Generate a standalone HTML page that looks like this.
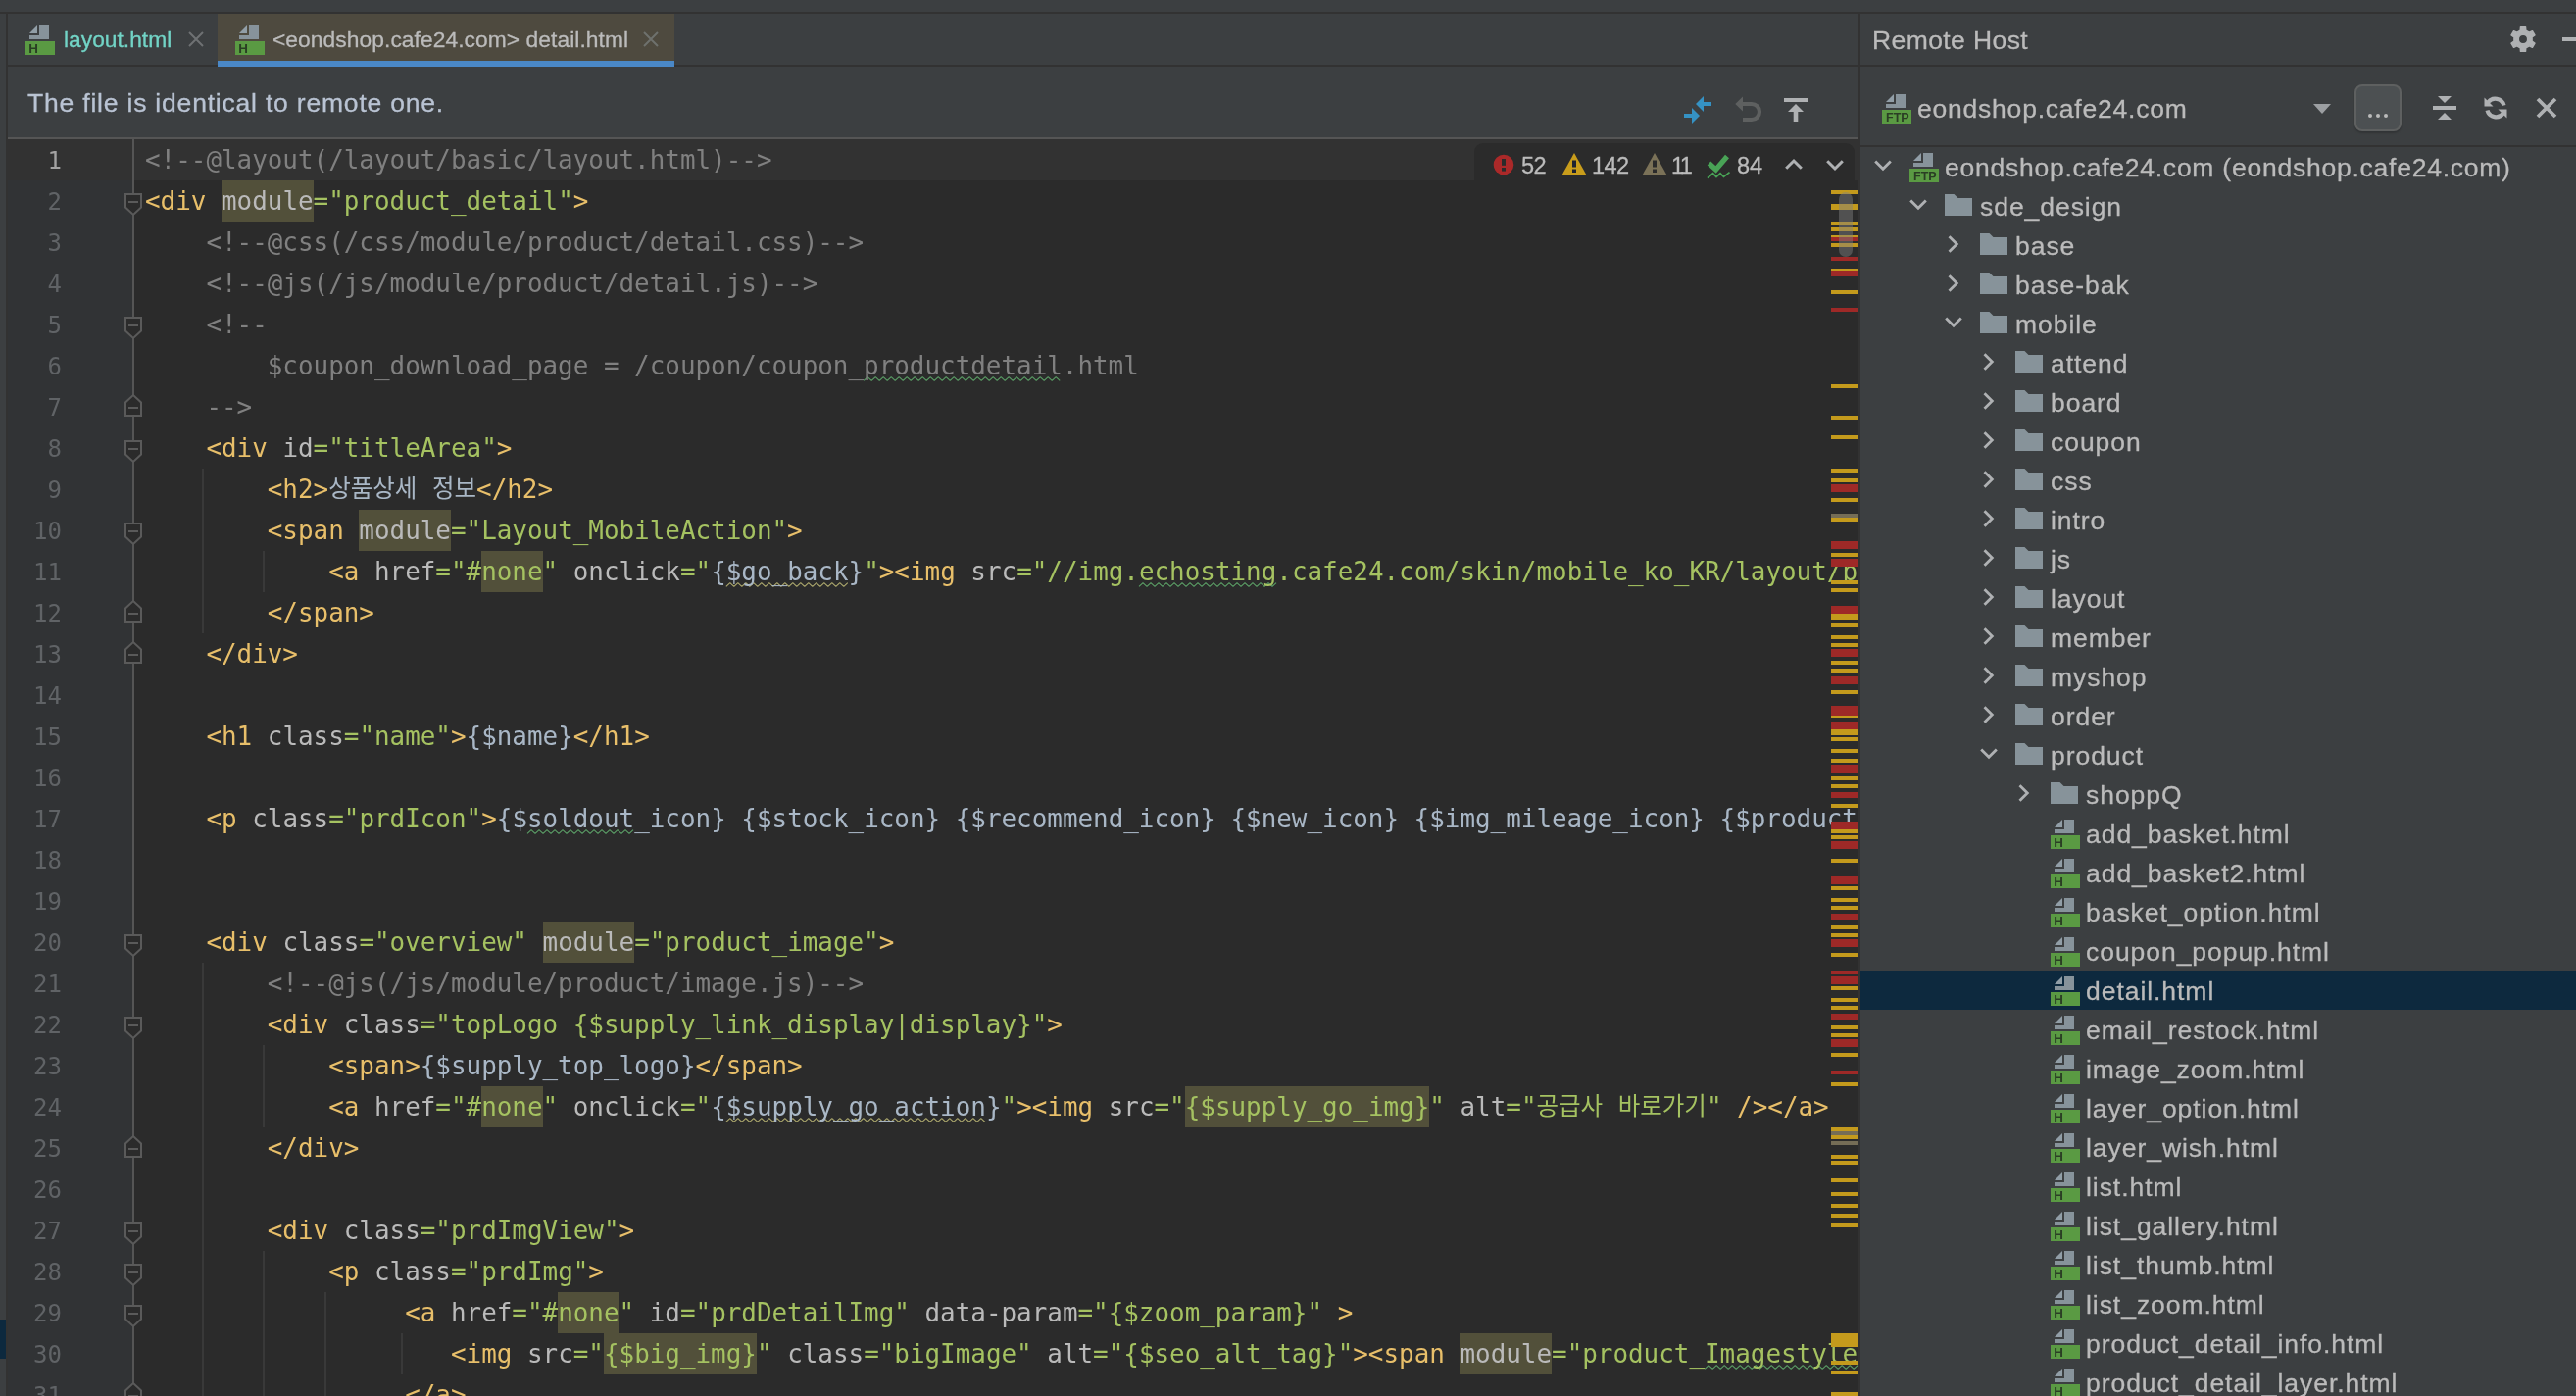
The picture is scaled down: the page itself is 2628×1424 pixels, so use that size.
<!DOCTYPE html>
<html lang="ko"><head><meta charset="utf-8"><title>detail.html</title>
<style>

*{box-sizing:border-box;margin:0;padding:0}
html,body{width:2628px;height:1424px;overflow:hidden;background:#3c3f41}
body{position:relative;font-family:"Liberation Sans","Noto Sans CJK KR",sans-serif;color:#bbbbbb;font-size:26.5px;letter-spacing:.76px;-webkit-text-stroke:.3px}
#root{position:absolute;left:0;top:0;width:2628px;height:1424px;overflow:hidden;will-change:transform}
.abs{position:absolute}
.ui{position:absolute;white-space:nowrap;line-height:1}
svg{position:absolute;overflow:visible}
#ed{position:absolute;left:8px;top:142px;width:1888px;height:1282px;background:#2b2b2b;overflow:hidden}
#gut{position:absolute;left:0;top:0;width:127px;height:100%;background:#313335}
#gsep{position:absolute;left:127px;top:0;width:2px;height:100%;background:#555555}
.ln{-webkit-text-stroke:0;position:absolute;left:0;width:55px;text-align:right;height:42px;line-height:42px;color:#606366;font-family:"DejaVu Sans Mono","Liberation Mono",monospace;font-size:24px;letter-spacing:0;padding-top:.7px}
.cl{-webkit-text-stroke:0;position:absolute;left:140.0px;height:42px;line-height:42px;white-space:pre;font-family:"DejaVu Sans Mono","Liberation Mono","Noto Sans CJK KR",monospace;font-size:25.91px;letter-spacing:0;color:#a9b7c6}
.cl span{display:inline-block;height:42px;vertical-align:top}
.c{color:#808080}.t{color:#e8bf6a}.a{color:#bababa}.v{color:#a5c261}.x{color:#a9b7c6}
.h{background:#52503a}
.k{font-size:24.5px}
.ig{position:absolute;width:2px;background:#393939}
.mk{position:absolute;left:1860px;width:28px}
.row{position:absolute;left:0;width:100%;height:40px}
.row .ui{top:6px;line-height:30px}

</style></head><body><div id="root">
<div class="abs" style="left:0;top:12px;width:2628px;height:2px;background:#323232"></div>
<div class="abs" style="left:6px;top:14px;width:2px;height:1410px;background:#323232"></div>
<div class="abs" style="left:0;top:1346px;width:6px;height:40px;background:#0d293e"></div>
<div class="abs" style="left:8px;top:66px;width:1888px;height:2px;background:#323232"></div>
<div class="abs" style="left:222px;top:14px;width:466px;height:54px;background:#4e4a3f"></div>
<div class="abs" style="left:222px;top:62px;width:466px;height:6px;background:#4a88c7"></div>
<svg style="left:26px;top:26px" width="30" height="30" viewBox="0 0 30 30"><path d="M14 0H24V14H4V10H14Z" fill="#87939b"/><path d="M12 0V8H4Z" fill="#919ea7"/><rect x="0" y="16" width="30" height="14" fill="#5a9a43"/><text x="3.2" y="27.8" font-family="Liberation Sans,sans-serif" font-weight="bold" font-size="13.4" letter-spacing="0" stroke="none" fill="#2a3e24" style="-webkit-text-stroke:0">H</text></svg>
<div class="ui" style="left:65px;top:29px;font-size:22.8px;letter-spacing:0;color:#72d4c6">layout.html</div>
<svg style="left:193px;top:33px" width="14" height="14" viewBox="0 0 14 14"><path d="M0 0L14 14M14 0L0 14" stroke="#6e7173" stroke-width="2" fill="none"/></svg>
<svg style="left:240px;top:26px" width="30" height="30" viewBox="0 0 30 30"><path d="M14 0H24V14H4V10H14Z" fill="#87939b"/><path d="M12 0V8H4Z" fill="#919ea7"/><rect x="0" y="16" width="30" height="14" fill="#5a9a43"/><text x="3.2" y="27.8" font-family="Liberation Sans,sans-serif" font-weight="bold" font-size="13.4" letter-spacing="0" stroke="none" fill="#2a3e24" style="-webkit-text-stroke:0">H</text></svg>
<div class="ui" style="left:278px;top:29px;font-size:22.8px;letter-spacing:.06px;color:#bbbbbb">&lt;eondshop.cafe24.com&gt; detail.html</div>
<svg style="left:657px;top:33px" width="14" height="14" viewBox="0 0 14 14"><path d="M0 0L14 14M14 0L0 14" stroke="#6e716d" stroke-width="2" fill="none"/></svg>
<div class="abs" style="left:8px;top:140px;width:1888px;height:2px;background:#555555"></div>
<div class="ui" style="left:28px;top:91.5px;letter-spacing:.8px;color:#b9c3d3">The file is identical to remote one.</div>
<svg style="left:1716px;top:96px" width="32" height="32" viewBox="0 0 32 32" fill="#3592c4"><path d="M14 10L22 2V8H30V12H22V18Z"/><path d="M18 22L10 14V20H2V24H10V30Z"/></svg>
<svg style="left:1768px;top:96px" width="32" height="32" viewBox="0 0 32 32"><path d="M2.3 10L10 2.4V17.4Z" fill="#5e6060"/><path d="M10 10H19A8 8 0 0 1 19 26H10" stroke="#5e6060" stroke-width="4.2" fill="none"/></svg>
<svg style="left:1816px;top:96px" width="32" height="32" viewBox="0 0 32 32" fill="#afb1b3"><rect x="4" y="4" width="24" height="4"/><path d="M16 10L24 18H18.3V28H13.7V18H8Z"/></svg>
<div id="ed">
<div id="gut"></div>
<div class="abs" style="left:0;top:0;width:1888px;height:42px;background:#323232"></div>
<div id="gsep"></div>
<div class="ig" style="left:197.8px;top:336px;height:168px"></div>
<div class="ig" style="left:260.2px;top:420px;height:42px"></div>
<div class="ig" style="left:197.8px;top:840px;height:462px"></div>
<div class="ig" style="left:260.2px;top:924px;height:84px"></div>
<div class="ig" style="left:260.2px;top:1134px;height:168px"></div>
<div class="ig" style="left:322.6px;top:1176px;height:126px"></div>
<div class="ig" style="left:400.6px;top:1218px;height:42px"></div>
<div class="ln" style="top:0px;color:#a4a3a3">1</div>
<div class="cl" style="top:0px"><span class="c">&lt;!--@layout(/layout/basic/layout.html)--&gt;</span></div>
<div class="ln" style="top:42px">2</div>
<div class="cl" style="top:42px"><span class="t">&lt;div </span><span class="a h">module</span><span class="v">="product_detail"</span><span class="t">&gt;</span></div>
<div class="ln" style="top:84px">3</div>
<div class="cl" style="top:84px"><span class="c">    &lt;!--@css(/css/module/product/detail.css)--&gt;</span></div>
<div class="ln" style="top:126px">4</div>
<div class="cl" style="top:126px"><span class="c">    &lt;!--@js(/js/module/product/detail.js)--&gt;</span></div>
<div class="ln" style="top:168px">5</div>
<div class="cl" style="top:168px"><span class="c">    &lt;!--</span></div>
<div class="ln" style="top:210px">6</div>
<svg style="left:0;top:210px" width="10" height="10"><polyline points="873.2 36.4 877.2 32.6 881.2 36.4 885.2 32.6 889.2 36.4 893.2 32.6 897.2 36.4 901.2 32.6 905.2 36.4 909.2 32.6 913.2 36.4 917.2 32.6 921.2 36.4 925.2 32.6 929.2 36.4 933.2 32.6 937.2 36.4 941.2 32.6 945.2 36.4 949.2 32.6 953.2 36.4 957.2 32.6 961.2 36.4 965.2 32.6 969.2 36.4 973.2 32.6 977.2 36.4 981.2 32.6 985.2 36.4 989.2 32.6 993.2 36.4 997.2 32.6 1001.2 36.4 1005.2 32.6 1009.2 36.4 1013.2 32.6 1017.2 36.4 1021.2 32.6 1025.2 36.4 1029.2 32.6 1033.2 36.4 1037.2 32.6 1041.2 36.4 1045.2 32.6 1049.2 36.4 1053.2 32.6 1057.2 36.4 1061.2 32.6 1065.2 36.4 1069.2 32.6 1073.2 36.4" fill="none" stroke="#5a9d65" stroke-width="1.15" stroke-linejoin="bevel"/></svg>
<div class="cl" style="top:210px"><span class="c">        $coupon_download_page = /coupon/coupon_</span><span class="c">productdetail</span><span class="c">.html</span></div>
<div class="ln" style="top:252px">7</div>
<div class="cl" style="top:252px"><span class="c">    --&gt;</span></div>
<div class="ln" style="top:294px">8</div>
<div class="cl" style="top:294px"><span class="t">    &lt;div </span><span class="a">id</span><span class="v">="titleArea"</span><span class="t">&gt;</span></div>
<div class="ln" style="top:336px">9</div>
<div class="cl" style="top:336px"><span class="t">        &lt;h2&gt;</span><span class="x k">상품상세</span><span class="x"> </span><span class="x k">정보</span><span class="t">&lt;/h2&gt;</span></div>
<div class="ln" style="top:378px">10</div>
<div class="cl" style="top:378px"><span class="t">        &lt;span </span><span class="a h">module</span><span class="v">="Layout_MobileAction"</span><span class="t">&gt;</span></div>
<div class="ln" style="top:420px">11</div>
<svg style="left:0;top:420px" width="10" height="10"><polyline points="732.8 36.4 736.8 32.6 740.8 36.4 744.8 32.6 748.8 36.4 752.8 32.6 756.8 36.4 760.8 32.6 764.8 36.4 768.8 32.6 772.8 36.4 776.8 32.6 780.8 36.4 784.8 32.6 788.8 36.4 792.8 32.6 796.8 36.4 800.8 32.6 804.8 36.4 808.8 32.6 812.8 36.4 816.8 32.6 820.8 36.4 824.8 32.6 828.8 36.4 832.8 32.6 836.8 36.4 840.8 32.6 844.8 36.4 848.8 32.6 852.8 36.4 856.8 32.6" fill="none" stroke="#aca86d" stroke-width="1.15" stroke-linejoin="bevel"/></svg>
<svg style="left:0;top:420px" width="10" height="10"><polyline points="1154.0 36.4 1158.0 32.6 1162.0 36.4 1166.0 32.6 1170.0 36.4 1174.0 32.6 1178.0 36.4 1182.0 32.6 1186.0 36.4 1190.0 32.6 1194.0 36.4 1198.0 32.6 1202.0 36.4 1206.0 32.6 1210.0 36.4 1214.0 32.6 1218.0 36.4 1222.0 32.6 1226.0 36.4 1230.0 32.6 1234.0 36.4 1238.0 32.6 1242.0 36.4 1246.0 32.6 1250.0 36.4 1254.0 32.6 1258.0 36.4 1262.0 32.6 1266.0 36.4 1270.0 32.6 1274.0 36.4 1278.0 32.6 1282.0 36.4 1286.0 32.6 1290.0 36.4 1294.0 32.6" fill="none" stroke="#5a9d65" stroke-width="1.15" stroke-linejoin="bevel"/></svg>
<div class="cl" style="top:420px"><span class="t">            &lt;a </span><span class="a">href</span><span class="v">="#</span><span class="v h">none</span><span class="v">"</span><span class="a"> onclick</span><span class="v">="</span><span class="x">{</span><span class="x">$go_back</span><span class="x">}</span><span class="v">"</span><span class="t">&gt;&lt;img </span><span class="a">src</span><span class="v">="//img.</span><span class="v">echosting</span><span class="v">.cafe24.com/skin/mobile_ko_KR/layout/btn_back.gif"</span><span class="a"> width</span><span class="v">="33"</span></div>
<div class="ln" style="top:462px">12</div>
<div class="cl" style="top:462px"><span class="t">        &lt;/span&gt;</span></div>
<div class="ln" style="top:504px">13</div>
<div class="cl" style="top:504px"><span class="t">    &lt;/div&gt;</span></div>
<div class="ln" style="top:546px">14</div>
<div class="ln" style="top:588px">15</div>
<div class="cl" style="top:588px"><span class="t">    &lt;h1 </span><span class="a">class</span><span class="v">="name"</span><span class="t">&gt;</span><span class="x">{$name}</span><span class="t">&lt;/h1&gt;</span></div>
<div class="ln" style="top:630px">16</div>
<div class="ln" style="top:672px">17</div>
<svg style="left:0;top:672px" width="10" height="10"><polyline points="530.0 36.4 534.0 32.6 538.0 36.4 542.0 32.6 546.0 36.4 550.0 32.6 554.0 36.4 558.0 32.6 562.0 36.4 566.0 32.6 570.0 36.4 574.0 32.6 578.0 36.4 582.0 32.6 586.0 36.4 590.0 32.6 594.0 36.4 598.0 32.6 602.0 36.4 606.0 32.6 610.0 36.4 614.0 32.6 618.0 36.4 622.0 32.6 626.0 36.4 630.0 32.6 634.0 36.4 638.0 32.6" fill="none" stroke="#5a9d65" stroke-width="1.15" stroke-linejoin="bevel"/></svg>
<div class="cl" style="top:672px"><span class="t">    &lt;p </span><span class="a">class</span><span class="v">="prdIcon"</span><span class="t">&gt;</span><span class="x">{$</span><span class="x">soldout</span><span class="x">_icon} {$stock_icon} {$recommend_icon} {$new_icon} {$img_mileage_icon} {$product_custom_icon}</span></div>
<div class="ln" style="top:714px">18</div>
<div class="ln" style="top:756px">19</div>
<div class="ln" style="top:798px">20</div>
<div class="cl" style="top:798px"><span class="t">    &lt;div </span><span class="a">class</span><span class="v">="overview"</span><span class="a"> </span><span class="a h">module</span><span class="v">="product_image"</span><span class="t">&gt;</span></div>
<div class="ln" style="top:840px">21</div>
<div class="cl" style="top:840px"><span class="c">        &lt;!--@js(/js/module/product/image.js)--&gt;</span></div>
<div class="ln" style="top:882px">22</div>
<div class="cl" style="top:882px"><span class="t">        &lt;div </span><span class="a">class</span><span class="v">="topLogo {$supply_link_display|display}"</span><span class="t">&gt;</span></div>
<div class="ln" style="top:924px">23</div>
<div class="cl" style="top:924px"><span class="t">            &lt;span&gt;</span><span class="x">{$supply_top_logo}</span><span class="t">&lt;/span&gt;</span></div>
<div class="ln" style="top:966px">24</div>
<svg style="left:0;top:966px" width="10" height="10"><polyline points="732.8 36.4 736.8 32.6 740.8 36.4 744.8 32.6 748.8 36.4 752.8 32.6 756.8 36.4 760.8 32.6 764.8 36.4 768.8 32.6 772.8 36.4 776.8 32.6 780.8 36.4 784.8 32.6 788.8 36.4 792.8 32.6 796.8 36.4 800.8 32.6 804.8 36.4 808.8 32.6 812.8 36.4 816.8 32.6 820.8 36.4 824.8 32.6 828.8 36.4 832.8 32.6 836.8 36.4 840.8 32.6 844.8 36.4 848.8 32.6 852.8 36.4 856.8 32.6 860.8 36.4 864.8 32.6 868.8 36.4 872.8 32.6 876.8 36.4 880.8 32.6 884.8 36.4 888.8 32.6 892.8 36.4 896.8 32.6 900.8 36.4 904.8 32.6 908.8 36.4 912.8 32.6 916.8 36.4 920.8 32.6 924.8 36.4 928.8 32.6 932.8 36.4 936.8 32.6 940.8 36.4 944.8 32.6 948.8 36.4 952.8 32.6 956.8 36.4 960.8 32.6 964.8 36.4 968.8 32.6 972.8 36.4 976.8 32.6 980.8 36.4 984.8 32.6 988.8 36.4 992.8 32.6 996.8 36.4" fill="none" stroke="#aca86d" stroke-width="1.15" stroke-linejoin="bevel"/></svg>
<div class="cl" style="top:966px"><span class="t">            &lt;a </span><span class="a">href</span><span class="v">="#</span><span class="v h">none</span><span class="v">"</span><span class="a"> onclick</span><span class="v">="</span><span class="x">{</span><span class="x">$supply_go_action</span><span class="x">}</span><span class="v">"</span><span class="t">&gt;&lt;img </span><span class="a">src</span><span class="v">="</span><span class="v h">{$supply_go_img}</span><span class="v">"</span><span class="a"> alt</span><span class="v">="</span><span class="v k">공급사</span><span class="v"> </span><span class="v k">바로가기</span><span class="v">"</span><span class="t"> /&gt;&lt;/a&gt;</span></div>
<div class="ln" style="top:1008px">25</div>
<div class="cl" style="top:1008px"><span class="t">        &lt;/div&gt;</span></div>
<div class="ln" style="top:1050px">26</div>
<div class="ln" style="top:1092px">27</div>
<div class="cl" style="top:1092px"><span class="t">        &lt;div </span><span class="a">class</span><span class="v">="prdImgView"</span><span class="t">&gt;</span></div>
<div class="ln" style="top:1134px">28</div>
<div class="cl" style="top:1134px"><span class="t">            &lt;p </span><span class="a">class</span><span class="v">="prdImg"</span><span class="t">&gt;</span></div>
<div class="ln" style="top:1176px">29</div>
<div class="cl" style="top:1176px"><span class="t">                 &lt;a </span><span class="a">href</span><span class="v">="#</span><span class="v h">none</span><span class="v">"</span><span class="a"> id</span><span class="v">="prdDetailImg"</span><span class="a"> data-param</span><span class="v">="{$zoom_param}"</span><span class="t"> &gt;</span></div>
<div class="ln" style="top:1218px">30</div>
<svg style="left:0;top:1218px" width="10" height="10"><polyline points="1731.2 36.4 1735.2 32.6 1739.2 36.4 1743.2 32.6 1747.2 36.4 1751.2 32.6 1755.2 36.4 1759.2 32.6 1763.2 36.4 1767.2 32.6 1771.2 36.4 1775.2 32.6 1779.2 36.4 1783.2 32.6 1787.2 36.4 1791.2 32.6 1795.2 36.4 1799.2 32.6 1803.2 36.4 1807.2 32.6 1811.2 36.4 1815.2 32.6 1819.2 36.4 1823.2 32.6 1827.2 36.4 1831.2 32.6 1835.2 36.4 1839.2 32.6 1843.2 36.4 1847.2 32.6 1851.2 36.4 1855.2 32.6 1859.2 36.4 1863.2 32.6 1867.2 36.4 1871.2 32.6 1875.2 36.4 1879.2 32.6 1883.2 36.4 1887.2 32.6" fill="none" stroke="#5a9d65" stroke-width="1.15" stroke-linejoin="bevel"/></svg>
<div class="cl" style="top:1218px"><span class="t">                    &lt;img </span><span class="a">src</span><span class="v">="</span><span class="v h">{$big_img}</span><span class="v">"</span><span class="a"> class</span><span class="v">="bigImage"</span><span class="a"> alt</span><span class="v">="{$seo_alt_tag}"</span><span class="t">&gt;&lt;span </span><span class="a h">module</span><span class="v">="product_</span><span class="v">Imagestyle</span><span class="v">"</span></div>
<div class="ln" style="top:1260px">31</div>
<div class="cl" style="top:1260px"><span class="t">                 &lt;/a&gt;</span></div>
<div class="abs" style="left:1496px;top:4px;width:388px;height:38px;background:#2b2b2b;border-radius:9px 9px 0 0"></div>
<svg style="left:1515px;top:15px" width="22" height="22" viewBox="0 0 22 22"><circle cx="11" cy="11" r="10.3" fill="#ab2929"/><rect x="9" y="5" width="4" height="6.8" fill="#2b2b2b"/><rect x="9" y="14" width="4" height="3.6" fill="#2b2b2b"/></svg>
<svg style="left:1585px;top:14px" width="26" height="23" viewBox="0 0 26 23"><path d="M13 0L25.2 22H0.8Z" fill="#c99d1b"/><rect x="11" y="7.5" width="4" height="7" fill="#1d2230"/><rect x="11" y="16.5" width="4" height="3.5" fill="#1d2230"/></svg>
<svg style="left:1667px;top:14px" width="26" height="23" viewBox="0 0 26 23"><path d="M13 0L25.2 22H0.8Z" fill="#7b7258"/><rect x="11" y="7.5" width="4" height="7" fill="#2b2b2b"/><rect x="11" y="16.5" width="4" height="3.5" fill="#2b2b2b"/></svg>
<svg style="left:1733px;top:15px" width="26" height="26" viewBox="0 0 26 26"><path d="M2.5 9.5L9.5 16L21 2.5" stroke="#49a356" stroke-width="5.2" fill="none"/><path d="M1 24.6L6.5 19.8L10 23.4L14 19.8L17.5 23.4L23.5 18.6" stroke="#49a356" stroke-width="1.8" fill="none"/></svg>
<div class="ui" style="left:1544px;top:15.5px;font-size:23.6px;letter-spacing:-0.6px;color:#bbbbbb">52</div>
<div class="ui" style="left:1616px;top:15.5px;font-size:23.6px;letter-spacing:-0.6px;color:#bbbbbb">142</div>
<div class="ui" style="left:1697px;top:15.5px;font-size:23.6px;letter-spacing:-2.6px;color:#bbbbbb">11</div>
<div class="ui" style="left:1764px;top:15.5px;font-size:23.6px;letter-spacing:0px;color:#bbbbbb">84</div>
<svg style="left:1813px;top:19px" width="18" height="12" viewBox="0 0 18 12"><path d="M1.2 10.8L9 3L16.8 10.8" stroke="#afb1b3" stroke-width="3" fill="none"/></svg>
<svg style="left:1855px;top:21px" width="18" height="12" viewBox="0 0 18 12"><path d="M1.2 1.2L9 9L16.8 1.2" stroke="#afb1b3" stroke-width="3" fill="none"/></svg>
<div class="mk" style="top:52px;height:4px;background:#c49a1c"></div>
<div class="mk" style="top:66px;height:6px;background:#c49a1c"></div>
<div class="mk" style="top:84px;height:4px;background:#c49a1c"></div>
<div class="mk" style="top:90px;height:4px;background:#c49a1c"></div>
<div class="mk" style="top:98px;height:2px;background:#c49a1c"></div>
<div class="mk" style="top:100px;height:4px;background:#9e2927"></div>
<div class="mk" style="top:106px;height:4px;background:#c49a1c"></div>
<div class="mk" style="top:120px;height:4px;background:#9e2927"></div>
<div class="mk" style="top:132px;height:2px;background:#c49a1c"></div>
<div class="mk" style="top:134px;height:6px;background:#9e2927"></div>
<div class="mk" style="top:154px;height:4px;background:#c49a1c"></div>
<div class="mk" style="top:172px;height:4px;background:#9e2927"></div>
<div class="mk" style="top:250px;height:4px;background:#c49a1c"></div>
<div class="mk" style="top:282px;height:4px;background:#c49a1c"></div>
<div class="mk" style="top:302px;height:4px;background:#c49a1c"></div>
<div class="mk" style="top:336px;height:4px;background:#c49a1c"></div>
<div class="mk" style="top:346px;height:4px;background:#c49a1c"></div>
<div class="mk" style="top:352px;height:8px;background:#9e2927"></div>
<div class="mk" style="top:366px;height:4px;background:#c49a1c"></div>
<div class="mk" style="top:382px;height:4px;background:#756d56"></div>
<div class="mk" style="top:386px;height:4px;background:#c49a1c"></div>
<div class="mk" style="top:410px;height:8px;background:#9e2927"></div>
<div class="mk" style="top:422px;height:4px;background:#c49a1c"></div>
<div class="mk" style="top:428px;height:8px;background:#9e2927"></div>
<div class="mk" style="top:450px;height:4px;background:#c49a1c"></div>
<div class="mk" style="top:458px;height:4px;background:#c49a1c"></div>
<div class="mk" style="top:476px;height:8px;background:#9e2927"></div>
<div class="mk" style="top:484px;height:6px;background:#c49a1c"></div>
<div class="mk" style="top:494px;height:4px;background:#c49a1c"></div>
<div class="mk" style="top:506px;height:4px;background:#c49a1c"></div>
<div class="mk" style="top:514px;height:4px;background:#c49a1c"></div>
<div class="mk" style="top:520px;height:8px;background:#9e2927"></div>
<div class="mk" style="top:532px;height:4px;background:#c49a1c"></div>
<div class="mk" style="top:540px;height:4px;background:#c49a1c"></div>
<div class="mk" style="top:548px;height:8px;background:#9e2927"></div>
<div class="mk" style="top:562px;height:4px;background:#c49a1c"></div>
<div class="mk" style="top:578px;height:10px;background:#9e2927"></div>
<div class="mk" style="top:588px;height:2px;background:#c49a1c"></div>
<div class="mk" style="top:594px;height:8px;background:#9e2927"></div>
<div class="mk" style="top:602px;height:6px;background:#c49a1c"></div>
<div class="mk" style="top:610px;height:4px;background:#c49a1c"></div>
<div class="mk" style="top:622px;height:4px;background:#c49a1c"></div>
<div class="mk" style="top:632px;height:4px;background:#c49a1c"></div>
<div class="mk" style="top:638px;height:8px;background:#9e2927"></div>
<div class="mk" style="top:650px;height:4px;background:#c49a1c"></div>
<div class="mk" style="top:658px;height:4px;background:#c49a1c"></div>
<div class="mk" style="top:666px;height:6px;background:#9e2927"></div>
<div class="mk" style="top:678px;height:4px;background:#c49a1c"></div>
<div class="mk" style="top:696px;height:8px;background:#9e2927"></div>
<div class="mk" style="top:704px;height:4px;background:#c49a1c"></div>
<div class="mk" style="top:710px;height:4px;background:#c49a1c"></div>
<div class="mk" style="top:716px;height:8px;background:#9e2927"></div>
<div class="mk" style="top:734px;height:4px;background:#c49a1c"></div>
<div class="mk" style="top:752px;height:8px;background:#9e2927"></div>
<div class="mk" style="top:762px;height:4px;background:#c49a1c"></div>
<div class="mk" style="top:774px;height:4px;background:#c49a1c"></div>
<div class="mk" style="top:782px;height:4px;background:#c49a1c"></div>
<div class="mk" style="top:790px;height:6px;background:#9e2927"></div>
<div class="mk" style="top:802px;height:4px;background:#c49a1c"></div>
<div class="mk" style="top:810px;height:4px;background:#c49a1c"></div>
<div class="mk" style="top:816px;height:8px;background:#9e2927"></div>
<div class="mk" style="top:830px;height:4px;background:#c49a1c"></div>
<div class="mk" style="top:848px;height:4px;background:#9e2927"></div>
<div class="mk" style="top:854px;height:8px;background:#9e2927"></div>
<div class="mk" style="top:864px;height:4px;background:#c49a1c"></div>
<div class="mk" style="top:876px;height:4px;background:#c49a1c"></div>
<div class="mk" style="top:884px;height:4px;background:#c49a1c"></div>
<div class="mk" style="top:892px;height:6px;background:#9e2927"></div>
<div class="mk" style="top:904px;height:4px;background:#c49a1c"></div>
<div class="mk" style="top:912px;height:4px;background:#c49a1c"></div>
<div class="mk" style="top:918px;height:8px;background:#9e2927"></div>
<div class="mk" style="top:932px;height:4px;background:#c49a1c"></div>
<div class="mk" style="top:950px;height:4px;background:#9e2927"></div>
<div class="mk" style="top:962px;height:4px;background:#c49a1c"></div>
<div class="mk" style="top:1008px;height:4px;background:#c49a1c"></div>
<div class="mk" style="top:1012px;height:4px;background:#756d56"></div>
<div class="mk" style="top:1016px;height:4px;background:#c49a1c"></div>
<div class="mk" style="top:1022px;height:4px;background:#756d56"></div>
<div class="mk" style="top:1036px;height:4px;background:#c49a1c"></div>
<div class="mk" style="top:1042px;height:4px;background:#c49a1c"></div>
<div class="mk" style="top:1060px;height:4px;background:#c49a1c"></div>
<div class="mk" style="top:1074px;height:4px;background:#c49a1c"></div>
<div class="mk" style="top:1086px;height:4px;background:#c49a1c"></div>
<div class="mk" style="top:1096px;height:4px;background:#c49a1c"></div>
<div class="mk" style="top:1106px;height:4px;background:#c49a1c"></div>
<div class="mk" style="top:1218px;height:14px;background:#c49a1c"></div>
<div class="mk" style="top:1246px;height:4px;background:#c49a1c"></div>
<div class="mk" style="top:1256px;height:4px;background:#c49a1c"></div>
<div class="mk" style="top:1278px;height:4px;background:#c49a1c"></div>
<div class="abs" style="left:1868px;top:54px;width:14px;height:66px;border-radius:7px;background:rgba(128,128,128,.45)"></div>
<svg style="left:119px;top:55px" width="18" height="23" viewBox="0 0 18 23"><path d="M1 1H17V14.5L9 22L1 14.5Z" fill="#2b2b2b" stroke="#5a5a5a" stroke-width="2"/><rect x="4" y="8" width="10" height="2" fill="#5a5a5a"/></svg>
<svg style="left:119px;top:181px" width="18" height="23" viewBox="0 0 18 23"><path d="M1 1H17V14.5L9 22L1 14.5Z" fill="#2b2b2b" stroke="#5a5a5a" stroke-width="2"/><rect x="4" y="8" width="10" height="2" fill="#5a5a5a"/></svg>
<svg style="left:119px;top:260px" width="18" height="23" viewBox="0 0 18 23"><path d="M1 22H17V8.5L9 1L1 8.5Z" fill="#2b2b2b" stroke="#5a5a5a" stroke-width="2"/><rect x="4" y="13" width="10" height="2" fill="#5a5a5a"/></svg>
<svg style="left:119px;top:307px" width="18" height="23" viewBox="0 0 18 23"><path d="M1 1H17V14.5L9 22L1 14.5Z" fill="#2b2b2b" stroke="#5a5a5a" stroke-width="2"/><rect x="4" y="8" width="10" height="2" fill="#5a5a5a"/></svg>
<svg style="left:119px;top:391px" width="18" height="23" viewBox="0 0 18 23"><path d="M1 1H17V14.5L9 22L1 14.5Z" fill="#2b2b2b" stroke="#5a5a5a" stroke-width="2"/><rect x="4" y="8" width="10" height="2" fill="#5a5a5a"/></svg>
<svg style="left:119px;top:470px" width="18" height="23" viewBox="0 0 18 23"><path d="M1 22H17V8.5L9 1L1 8.5Z" fill="#2b2b2b" stroke="#5a5a5a" stroke-width="2"/><rect x="4" y="13" width="10" height="2" fill="#5a5a5a"/></svg>
<svg style="left:119px;top:512px" width="18" height="23" viewBox="0 0 18 23"><path d="M1 22H17V8.5L9 1L1 8.5Z" fill="#2b2b2b" stroke="#5a5a5a" stroke-width="2"/><rect x="4" y="13" width="10" height="2" fill="#5a5a5a"/></svg>
<svg style="left:119px;top:811px" width="18" height="23" viewBox="0 0 18 23"><path d="M1 1H17V14.5L9 22L1 14.5Z" fill="#2b2b2b" stroke="#5a5a5a" stroke-width="2"/><rect x="4" y="8" width="10" height="2" fill="#5a5a5a"/></svg>
<svg style="left:119px;top:895px" width="18" height="23" viewBox="0 0 18 23"><path d="M1 1H17V14.5L9 22L1 14.5Z" fill="#2b2b2b" stroke="#5a5a5a" stroke-width="2"/><rect x="4" y="8" width="10" height="2" fill="#5a5a5a"/></svg>
<svg style="left:119px;top:1016px" width="18" height="23" viewBox="0 0 18 23"><path d="M1 22H17V8.5L9 1L1 8.5Z" fill="#2b2b2b" stroke="#5a5a5a" stroke-width="2"/><rect x="4" y="13" width="10" height="2" fill="#5a5a5a"/></svg>
<svg style="left:119px;top:1105px" width="18" height="23" viewBox="0 0 18 23"><path d="M1 1H17V14.5L9 22L1 14.5Z" fill="#2b2b2b" stroke="#5a5a5a" stroke-width="2"/><rect x="4" y="8" width="10" height="2" fill="#5a5a5a"/></svg>
<svg style="left:119px;top:1147px" width="18" height="23" viewBox="0 0 18 23"><path d="M1 1H17V14.5L9 22L1 14.5Z" fill="#2b2b2b" stroke="#5a5a5a" stroke-width="2"/><rect x="4" y="8" width="10" height="2" fill="#5a5a5a"/></svg>
<svg style="left:119px;top:1189px" width="18" height="23" viewBox="0 0 18 23"><path d="M1 1H17V14.5L9 22L1 14.5Z" fill="#2b2b2b" stroke="#5a5a5a" stroke-width="2"/><rect x="4" y="8" width="10" height="2" fill="#5a5a5a"/></svg>
<svg style="left:119px;top:1268px" width="18" height="23" viewBox="0 0 18 23"><path d="M1 22H17V8.5L9 1L1 8.5Z" fill="#2b2b2b" stroke="#5a5a5a" stroke-width="2"/><rect x="4" y="13" width="10" height="2" fill="#5a5a5a"/></svg>
</div>
<div class="abs" style="left:1896px;top:14px;width:2px;height:1410px;background:#323232"></div>
<div class="abs" style="left:1898px;top:66px;width:730px;height:2px;background:#323232"></div>
<div class="abs" style="left:1898px;top:148px;width:730px;height:2px;background:#323232"></div>
<div class="ui" style="left:1910px;top:27.5px;letter-spacing:.4px">Remote Host</div>
<svg style="left:2558px;top:24px" width="32" height="32" viewBox="0 0 32 32"><path d="M13.25 7.12L13.50 3.65L18.50 3.65L18.75 7.12L22.32 9.18L25.44 7.66L27.95 11.99L25.07 13.94L25.07 18.06L27.95 20.01L25.44 24.34L22.32 22.82L18.75 24.88L18.50 28.35L13.50 28.35L13.25 24.88L9.68 22.82L6.56 24.34L4.05 20.01L6.93 18.06L6.93 13.94L4.05 11.99L6.56 7.66L9.68 9.18ZM20.7 16A4.7 4.7 0 1 0 11.3 16A4.7 4.7 0 1 0 20.7 16Z" fill="#afb1b3" fill-rule="evenodd" stroke="#afb1b3" stroke-width="1.5" stroke-linejoin="round"/></svg>
<div class="abs" style="left:2614px;top:38px;width:20px;height:4px;background:#afb1b3"></div>
<svg style="left:1920px;top:96px" width="30" height="30" viewBox="0 0 30 30"><path d="M14 0H24V14H4V10H14Z" fill="#87939b"/><path d="M12 0V8H4Z" fill="#919ea7"/><rect x="0" y="16" width="30" height="14" fill="#5a9a43"/><text x="4" y="27.8" textLength="23.7" lengthAdjust="spacingAndGlyphs" font-family="Liberation Sans,sans-serif" font-weight="bold" font-size="13.4" letter-spacing="0" fill="#2a3e24" style="-webkit-text-stroke:0">FTP</text></svg>
<div class="ui" style="left:1956px;top:97.5px;letter-spacing:.78px">eondshop.cafe24.com</div>
<svg style="left:2360px;top:106px" width="18" height="10" viewBox="0 0 18 10"><path d="M0 0H18L9 10Z" fill="#9c9fa2"/></svg>
<div class="abs" style="left:2402px;top:86px;width:48px;height:48px;background:#4c5052;border:2px solid #5e6060;border-radius:8px;box-shadow:0 2px 2px rgba(0,0,0,.18)"></div>
<div class="abs" style="left:2416px;top:116px;width:4px;height:4px;border-radius:2px;background:#bbbbbb"></div>
<div class="abs" style="left:2424px;top:116px;width:4px;height:4px;border-radius:2px;background:#bbbbbb"></div>
<div class="abs" style="left:2432px;top:116px;width:4px;height:4px;border-radius:2px;background:#bbbbbb"></div>
<svg style="left:2482px;top:98px" width="24" height="24" viewBox="0 0 24 24" fill="#afb1b3"><path d="M5 0H19L12 7Z"/><rect x="0" y="10" width="24" height="4"/><path d="M5 24H19L12 17Z"/></svg>
<svg style="left:2534px;top:98px" width="24" height="24" viewBox="0 0 24 24"><path d="M20.5 9.5A9.2 9.2 0 0 0 4.2 6.5" stroke="#afb1b3" stroke-width="4.2" fill="none"/><path d="M3.5 14.5A9.2 9.2 0 0 0 19.8 17.5" stroke="#afb1b3" stroke-width="4.2" fill="none"/><path d="M0.5 1.5V10.5H9.5Z" fill="#afb1b3"/><path d="M23.5 22.5V13.5H14.5Z" fill="#afb1b3"/></svg>
<svg style="left:2589px;top:101px" width="18" height="18" viewBox="0 0 18 18"><path d="M0 0L18 18M18 0L0 18" stroke="#afb1b3" stroke-width="3.8" fill="none"/></svg>
<div class="abs" style="left:1898px;top:150px;width:730px;height:1274px;overflow:hidden">
<svg style="left:14px;top:13px" width="18" height="12" viewBox="0 0 18 12"><path d="M1.2 1.5L9 9.3L16.8 1.5" stroke="#afb1b3" stroke-width="2.8" fill="none"/></svg><svg style="left:50px;top:6px" width="30" height="30" viewBox="0 0 30 30"><path d="M14 0H24V14H4V10H14Z" fill="#87939b"/><path d="M12 0V8H4Z" fill="#919ea7"/><rect x="0" y="16" width="30" height="14" fill="#5a9a43"/><text x="4" y="27.8" textLength="23.7" lengthAdjust="spacingAndGlyphs" font-family="Liberation Sans,sans-serif" font-weight="bold" font-size="13.4" letter-spacing="0" fill="#2a3e24" style="-webkit-text-stroke:0">FTP</text></svg><div class="ui" style="left:86px;top:7.5px;letter-spacing:0.76px">eondshop.cafe24.com (eondshop.cafe24.com)</div>
<svg style="left:50px;top:53px" width="18" height="12" viewBox="0 0 18 12"><path d="M1.2 1.5L9 9.3L16.8 1.5" stroke="#afb1b3" stroke-width="2.8" fill="none"/></svg><svg style="left:86px;top:48px" width="28" height="22" viewBox="0 0 28 22"><path d="M0 0H9.5L13.5 4H28V22H0Z" fill="#87939a"/></svg><div class="ui" style="left:122px;top:47.5px;letter-spacing:0.95px">sde_design</div>
<svg style="left:89px;top:90px" width="12" height="18" viewBox="0 0 12 18"><path d="M1.5 1.2L9.3 9L1.5 16.8" stroke="#afb1b3" stroke-width="2.8" fill="none"/></svg><svg style="left:122px;top:88px" width="28" height="22" viewBox="0 0 28 22"><path d="M0 0H9.5L13.5 4H28V22H0Z" fill="#87939a"/></svg><div class="ui" style="left:158px;top:87.5px;letter-spacing:0.95px">base</div>
<svg style="left:89px;top:130px" width="12" height="18" viewBox="0 0 12 18"><path d="M1.5 1.2L9.3 9L1.5 16.8" stroke="#afb1b3" stroke-width="2.8" fill="none"/></svg><svg style="left:122px;top:128px" width="28" height="22" viewBox="0 0 28 22"><path d="M0 0H9.5L13.5 4H28V22H0Z" fill="#87939a"/></svg><div class="ui" style="left:158px;top:127.5px;letter-spacing:0.95px">base-bak</div>
<svg style="left:86px;top:173px" width="18" height="12" viewBox="0 0 18 12"><path d="M1.2 1.5L9 9.3L16.8 1.5" stroke="#afb1b3" stroke-width="2.8" fill="none"/></svg><svg style="left:122px;top:168px" width="28" height="22" viewBox="0 0 28 22"><path d="M0 0H9.5L13.5 4H28V22H0Z" fill="#87939a"/></svg><div class="ui" style="left:158px;top:167.5px;letter-spacing:0.95px">mobile</div>
<svg style="left:125px;top:210px" width="12" height="18" viewBox="0 0 12 18"><path d="M1.5 1.2L9.3 9L1.5 16.8" stroke="#afb1b3" stroke-width="2.8" fill="none"/></svg><svg style="left:158px;top:208px" width="28" height="22" viewBox="0 0 28 22"><path d="M0 0H9.5L13.5 4H28V22H0Z" fill="#87939a"/></svg><div class="ui" style="left:194px;top:207.5px;letter-spacing:0.95px">attend</div>
<svg style="left:125px;top:250px" width="12" height="18" viewBox="0 0 12 18"><path d="M1.5 1.2L9.3 9L1.5 16.8" stroke="#afb1b3" stroke-width="2.8" fill="none"/></svg><svg style="left:158px;top:248px" width="28" height="22" viewBox="0 0 28 22"><path d="M0 0H9.5L13.5 4H28V22H0Z" fill="#87939a"/></svg><div class="ui" style="left:194px;top:247.5px;letter-spacing:0.95px">board</div>
<svg style="left:125px;top:290px" width="12" height="18" viewBox="0 0 12 18"><path d="M1.5 1.2L9.3 9L1.5 16.8" stroke="#afb1b3" stroke-width="2.8" fill="none"/></svg><svg style="left:158px;top:288px" width="28" height="22" viewBox="0 0 28 22"><path d="M0 0H9.5L13.5 4H28V22H0Z" fill="#87939a"/></svg><div class="ui" style="left:194px;top:287.5px;letter-spacing:0.95px">coupon</div>
<svg style="left:125px;top:330px" width="12" height="18" viewBox="0 0 12 18"><path d="M1.5 1.2L9.3 9L1.5 16.8" stroke="#afb1b3" stroke-width="2.8" fill="none"/></svg><svg style="left:158px;top:328px" width="28" height="22" viewBox="0 0 28 22"><path d="M0 0H9.5L13.5 4H28V22H0Z" fill="#87939a"/></svg><div class="ui" style="left:194px;top:327.5px;letter-spacing:0.95px">css</div>
<svg style="left:125px;top:370px" width="12" height="18" viewBox="0 0 12 18"><path d="M1.5 1.2L9.3 9L1.5 16.8" stroke="#afb1b3" stroke-width="2.8" fill="none"/></svg><svg style="left:158px;top:368px" width="28" height="22" viewBox="0 0 28 22"><path d="M0 0H9.5L13.5 4H28V22H0Z" fill="#87939a"/></svg><div class="ui" style="left:194px;top:367.5px;letter-spacing:0.95px">intro</div>
<svg style="left:125px;top:410px" width="12" height="18" viewBox="0 0 12 18"><path d="M1.5 1.2L9.3 9L1.5 16.8" stroke="#afb1b3" stroke-width="2.8" fill="none"/></svg><svg style="left:158px;top:408px" width="28" height="22" viewBox="0 0 28 22"><path d="M0 0H9.5L13.5 4H28V22H0Z" fill="#87939a"/></svg><div class="ui" style="left:194px;top:407.5px;letter-spacing:0.95px">js</div>
<svg style="left:125px;top:450px" width="12" height="18" viewBox="0 0 12 18"><path d="M1.5 1.2L9.3 9L1.5 16.8" stroke="#afb1b3" stroke-width="2.8" fill="none"/></svg><svg style="left:158px;top:448px" width="28" height="22" viewBox="0 0 28 22"><path d="M0 0H9.5L13.5 4H28V22H0Z" fill="#87939a"/></svg><div class="ui" style="left:194px;top:447.5px;letter-spacing:0.95px">layout</div>
<svg style="left:125px;top:490px" width="12" height="18" viewBox="0 0 12 18"><path d="M1.5 1.2L9.3 9L1.5 16.8" stroke="#afb1b3" stroke-width="2.8" fill="none"/></svg><svg style="left:158px;top:488px" width="28" height="22" viewBox="0 0 28 22"><path d="M0 0H9.5L13.5 4H28V22H0Z" fill="#87939a"/></svg><div class="ui" style="left:194px;top:487.5px;letter-spacing:0.95px">member</div>
<svg style="left:125px;top:530px" width="12" height="18" viewBox="0 0 12 18"><path d="M1.5 1.2L9.3 9L1.5 16.8" stroke="#afb1b3" stroke-width="2.8" fill="none"/></svg><svg style="left:158px;top:528px" width="28" height="22" viewBox="0 0 28 22"><path d="M0 0H9.5L13.5 4H28V22H0Z" fill="#87939a"/></svg><div class="ui" style="left:194px;top:527.5px;letter-spacing:0.95px">myshop</div>
<svg style="left:125px;top:570px" width="12" height="18" viewBox="0 0 12 18"><path d="M1.5 1.2L9.3 9L1.5 16.8" stroke="#afb1b3" stroke-width="2.8" fill="none"/></svg><svg style="left:158px;top:568px" width="28" height="22" viewBox="0 0 28 22"><path d="M0 0H9.5L13.5 4H28V22H0Z" fill="#87939a"/></svg><div class="ui" style="left:194px;top:567.5px;letter-spacing:0.95px">order</div>
<svg style="left:122px;top:613px" width="18" height="12" viewBox="0 0 18 12"><path d="M1.2 1.5L9 9.3L16.8 1.5" stroke="#afb1b3" stroke-width="2.8" fill="none"/></svg><svg style="left:158px;top:608px" width="28" height="22" viewBox="0 0 28 22"><path d="M0 0H9.5L13.5 4H28V22H0Z" fill="#87939a"/></svg><div class="ui" style="left:194px;top:607.5px;letter-spacing:0.95px">product</div>
<svg style="left:161px;top:650px" width="12" height="18" viewBox="0 0 12 18"><path d="M1.5 1.2L9.3 9L1.5 16.8" stroke="#afb1b3" stroke-width="2.8" fill="none"/></svg><svg style="left:194px;top:648px" width="28" height="22" viewBox="0 0 28 22"><path d="M0 0H9.5L13.5 4H28V22H0Z" fill="#87939a"/></svg><div class="ui" style="left:230px;top:647.5px;letter-spacing:0.95px">shoppQ</div>
<svg style="left:194px;top:686px" width="30" height="30" viewBox="0 0 30 30"><path d="M14 0H24V14H4V10H14Z" fill="#87939b"/><path d="M12 0V8H4Z" fill="#919ea7"/><rect x="0" y="16" width="30" height="14" fill="#5a9a43"/><text x="3.2" y="27.8" font-family="Liberation Sans,sans-serif" font-weight="bold" font-size="13.4" letter-spacing="0" stroke="none" fill="#2a3e24" style="-webkit-text-stroke:0">H</text></svg><div class="ui" style="left:230px;top:687.5px;letter-spacing:0.95px">add_basket.html</div>
<svg style="left:194px;top:726px" width="30" height="30" viewBox="0 0 30 30"><path d="M14 0H24V14H4V10H14Z" fill="#87939b"/><path d="M12 0V8H4Z" fill="#919ea7"/><rect x="0" y="16" width="30" height="14" fill="#5a9a43"/><text x="3.2" y="27.8" font-family="Liberation Sans,sans-serif" font-weight="bold" font-size="13.4" letter-spacing="0" stroke="none" fill="#2a3e24" style="-webkit-text-stroke:0">H</text></svg><div class="ui" style="left:230px;top:727.5px;letter-spacing:0.95px">add_basket2.html</div>
<svg style="left:194px;top:766px" width="30" height="30" viewBox="0 0 30 30"><path d="M14 0H24V14H4V10H14Z" fill="#87939b"/><path d="M12 0V8H4Z" fill="#919ea7"/><rect x="0" y="16" width="30" height="14" fill="#5a9a43"/><text x="3.2" y="27.8" font-family="Liberation Sans,sans-serif" font-weight="bold" font-size="13.4" letter-spacing="0" stroke="none" fill="#2a3e24" style="-webkit-text-stroke:0">H</text></svg><div class="ui" style="left:230px;top:767.5px;letter-spacing:0.95px">basket_option.html</div>
<svg style="left:194px;top:806px" width="30" height="30" viewBox="0 0 30 30"><path d="M14 0H24V14H4V10H14Z" fill="#87939b"/><path d="M12 0V8H4Z" fill="#919ea7"/><rect x="0" y="16" width="30" height="14" fill="#5a9a43"/><text x="3.2" y="27.8" font-family="Liberation Sans,sans-serif" font-weight="bold" font-size="13.4" letter-spacing="0" stroke="none" fill="#2a3e24" style="-webkit-text-stroke:0">H</text></svg><div class="ui" style="left:230px;top:807.5px;letter-spacing:0.95px">coupon_popup.html</div>
<div class="abs" style="left:0;top:840px;width:100%;height:40px;background:#0d293e"></div><svg style="left:194px;top:846px" width="30" height="30" viewBox="0 0 30 30"><path d="M14 0H24V14H4V10H14Z" fill="#87939b"/><path d="M12 0V8H4Z" fill="#919ea7"/><rect x="0" y="16" width="30" height="14" fill="#5a9a43"/><text x="3.2" y="27.8" font-family="Liberation Sans,sans-serif" font-weight="bold" font-size="13.4" letter-spacing="0" stroke="none" fill="#2a3e24" style="-webkit-text-stroke:0">H</text></svg><div class="ui" style="left:230px;top:847.5px;letter-spacing:0.95px">detail.html</div>
<svg style="left:194px;top:886px" width="30" height="30" viewBox="0 0 30 30"><path d="M14 0H24V14H4V10H14Z" fill="#87939b"/><path d="M12 0V8H4Z" fill="#919ea7"/><rect x="0" y="16" width="30" height="14" fill="#5a9a43"/><text x="3.2" y="27.8" font-family="Liberation Sans,sans-serif" font-weight="bold" font-size="13.4" letter-spacing="0" stroke="none" fill="#2a3e24" style="-webkit-text-stroke:0">H</text></svg><div class="ui" style="left:230px;top:887.5px;letter-spacing:0.95px">email_restock.html</div>
<svg style="left:194px;top:926px" width="30" height="30" viewBox="0 0 30 30"><path d="M14 0H24V14H4V10H14Z" fill="#87939b"/><path d="M12 0V8H4Z" fill="#919ea7"/><rect x="0" y="16" width="30" height="14" fill="#5a9a43"/><text x="3.2" y="27.8" font-family="Liberation Sans,sans-serif" font-weight="bold" font-size="13.4" letter-spacing="0" stroke="none" fill="#2a3e24" style="-webkit-text-stroke:0">H</text></svg><div class="ui" style="left:230px;top:927.5px;letter-spacing:0.95px">image_zoom.html</div>
<svg style="left:194px;top:966px" width="30" height="30" viewBox="0 0 30 30"><path d="M14 0H24V14H4V10H14Z" fill="#87939b"/><path d="M12 0V8H4Z" fill="#919ea7"/><rect x="0" y="16" width="30" height="14" fill="#5a9a43"/><text x="3.2" y="27.8" font-family="Liberation Sans,sans-serif" font-weight="bold" font-size="13.4" letter-spacing="0" stroke="none" fill="#2a3e24" style="-webkit-text-stroke:0">H</text></svg><div class="ui" style="left:230px;top:967.5px;letter-spacing:0.95px">layer_option.html</div>
<svg style="left:194px;top:1006px" width="30" height="30" viewBox="0 0 30 30"><path d="M14 0H24V14H4V10H14Z" fill="#87939b"/><path d="M12 0V8H4Z" fill="#919ea7"/><rect x="0" y="16" width="30" height="14" fill="#5a9a43"/><text x="3.2" y="27.8" font-family="Liberation Sans,sans-serif" font-weight="bold" font-size="13.4" letter-spacing="0" stroke="none" fill="#2a3e24" style="-webkit-text-stroke:0">H</text></svg><div class="ui" style="left:230px;top:1007.5px;letter-spacing:0.95px">layer_wish.html</div>
<svg style="left:194px;top:1046px" width="30" height="30" viewBox="0 0 30 30"><path d="M14 0H24V14H4V10H14Z" fill="#87939b"/><path d="M12 0V8H4Z" fill="#919ea7"/><rect x="0" y="16" width="30" height="14" fill="#5a9a43"/><text x="3.2" y="27.8" font-family="Liberation Sans,sans-serif" font-weight="bold" font-size="13.4" letter-spacing="0" stroke="none" fill="#2a3e24" style="-webkit-text-stroke:0">H</text></svg><div class="ui" style="left:230px;top:1047.5px;letter-spacing:0.95px">list.html</div>
<svg style="left:194px;top:1086px" width="30" height="30" viewBox="0 0 30 30"><path d="M14 0H24V14H4V10H14Z" fill="#87939b"/><path d="M12 0V8H4Z" fill="#919ea7"/><rect x="0" y="16" width="30" height="14" fill="#5a9a43"/><text x="3.2" y="27.8" font-family="Liberation Sans,sans-serif" font-weight="bold" font-size="13.4" letter-spacing="0" stroke="none" fill="#2a3e24" style="-webkit-text-stroke:0">H</text></svg><div class="ui" style="left:230px;top:1087.5px;letter-spacing:0.95px">list_gallery.html</div>
<svg style="left:194px;top:1126px" width="30" height="30" viewBox="0 0 30 30"><path d="M14 0H24V14H4V10H14Z" fill="#87939b"/><path d="M12 0V8H4Z" fill="#919ea7"/><rect x="0" y="16" width="30" height="14" fill="#5a9a43"/><text x="3.2" y="27.8" font-family="Liberation Sans,sans-serif" font-weight="bold" font-size="13.4" letter-spacing="0" stroke="none" fill="#2a3e24" style="-webkit-text-stroke:0">H</text></svg><div class="ui" style="left:230px;top:1127.5px;letter-spacing:0.95px">list_thumb.html</div>
<svg style="left:194px;top:1166px" width="30" height="30" viewBox="0 0 30 30"><path d="M14 0H24V14H4V10H14Z" fill="#87939b"/><path d="M12 0V8H4Z" fill="#919ea7"/><rect x="0" y="16" width="30" height="14" fill="#5a9a43"/><text x="3.2" y="27.8" font-family="Liberation Sans,sans-serif" font-weight="bold" font-size="13.4" letter-spacing="0" stroke="none" fill="#2a3e24" style="-webkit-text-stroke:0">H</text></svg><div class="ui" style="left:230px;top:1167.5px;letter-spacing:0.95px">list_zoom.html</div>
<svg style="left:194px;top:1206px" width="30" height="30" viewBox="0 0 30 30"><path d="M14 0H24V14H4V10H14Z" fill="#87939b"/><path d="M12 0V8H4Z" fill="#919ea7"/><rect x="0" y="16" width="30" height="14" fill="#5a9a43"/><text x="3.2" y="27.8" font-family="Liberation Sans,sans-serif" font-weight="bold" font-size="13.4" letter-spacing="0" stroke="none" fill="#2a3e24" style="-webkit-text-stroke:0">H</text></svg><div class="ui" style="left:230px;top:1207.5px;letter-spacing:0.95px">product_detail_info.html</div>
<svg style="left:194px;top:1246px" width="30" height="30" viewBox="0 0 30 30"><path d="M14 0H24V14H4V10H14Z" fill="#87939b"/><path d="M12 0V8H4Z" fill="#919ea7"/><rect x="0" y="16" width="30" height="14" fill="#5a9a43"/><text x="3.2" y="27.8" font-family="Liberation Sans,sans-serif" font-weight="bold" font-size="13.4" letter-spacing="0" stroke="none" fill="#2a3e24" style="-webkit-text-stroke:0">H</text></svg><div class="ui" style="left:230px;top:1247.5px;letter-spacing:0.95px">product_detail_layer.html</div>
</div>
</div></body></html>
